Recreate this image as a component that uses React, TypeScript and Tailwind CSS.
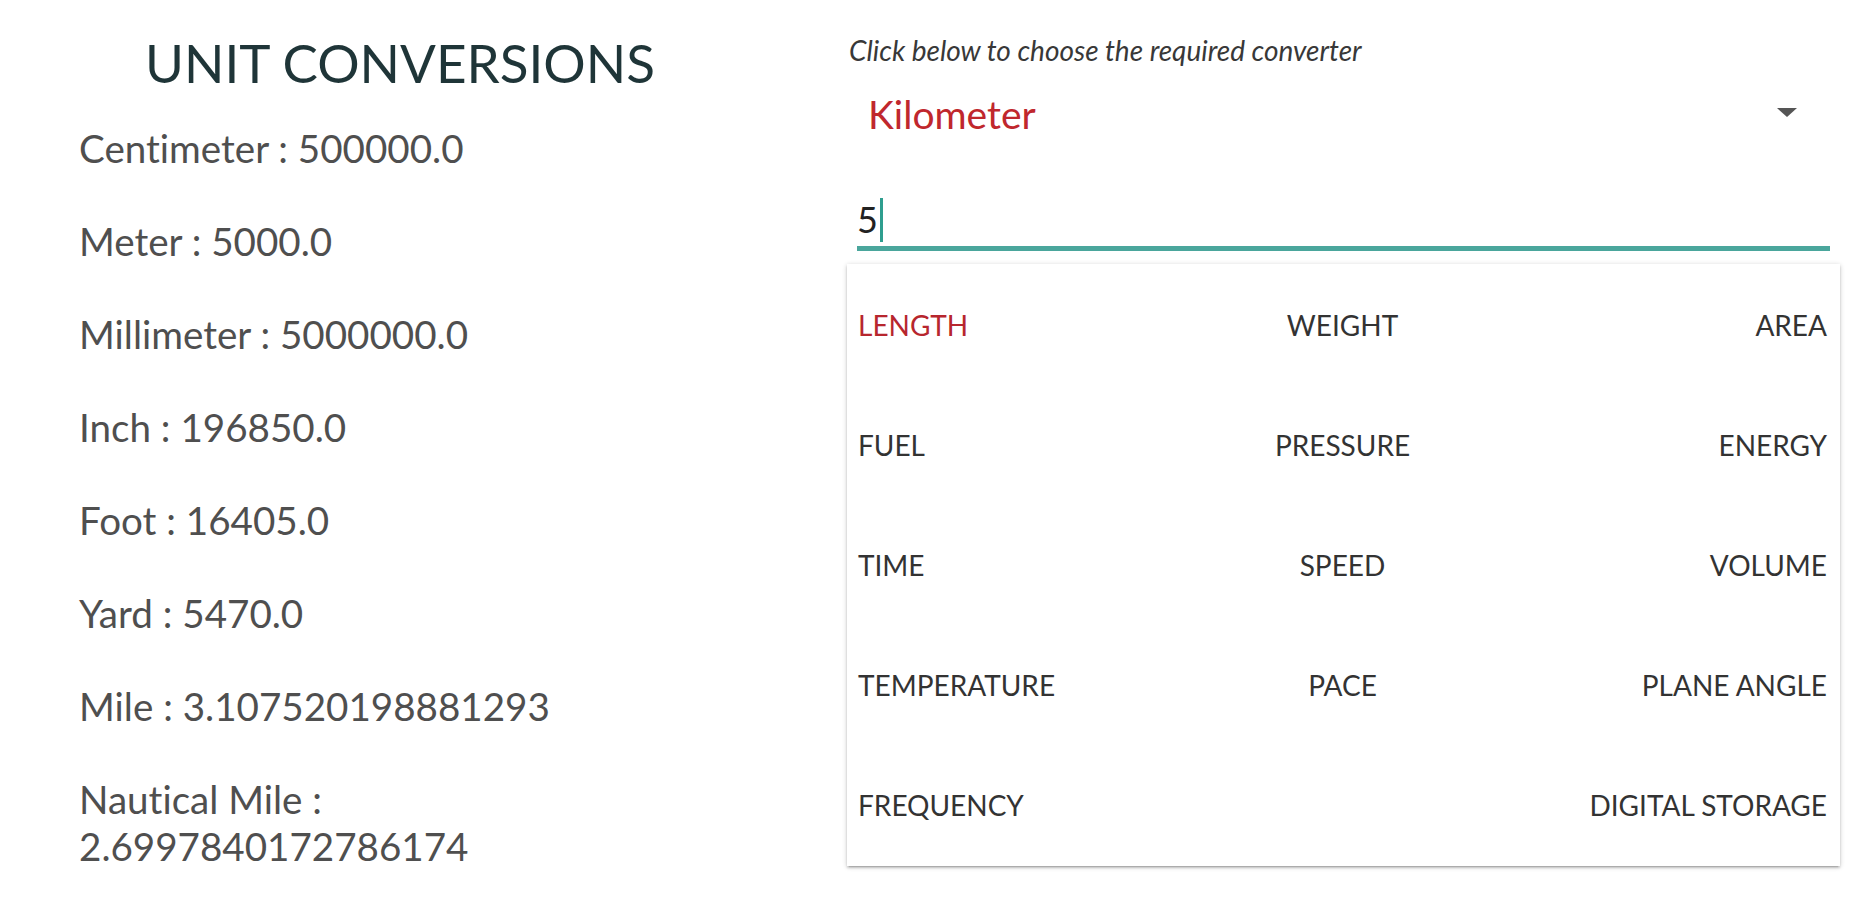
import React from "react";

const results: string[] = [
  "Centimeter : 500000.0",
  "Meter : 5000.0",
  "Millimeter : 5000000.0",
  "Inch : 196850.0",
  "Foot : 16405.0",
  "Yard : 5470.0",
  "Mile : 3.107520198881293",
  "Nautical Mile : 2.6997840172786174",
];

const categories: { label: string; active?: boolean }[] = [
  { label: "LENGTH", active: true },
  { label: "WEIGHT" },
  { label: "AREA" },
  { label: "FUEL" },
  { label: "PRESSURE" },
  { label: "ENERGY" },
  { label: "TIME" },
  { label: "SPEED" },
  { label: "VOLUME" },
  { label: "TEMPERATURE" },
  { label: "PACE" },
  { label: "PLANE ANGLE" },
  { label: "FREQUENCY" },
  { label: "" },
  { label: "DIGITAL STORAGE" },
];

const alignClasses = ["justify-start", "justify-center", "justify-end"];

export default function App() {
  return (
    <div
      className="flex w-full h-[900px] bg-white overflow-hidden [font-variant-ligatures:none]"
      style={{ fontFamily: "Lato, 'Open Sans', 'Liberation Sans', sans-serif" }}
    >
      {/* Left column */}
      <div className="w-[800px] shrink-0 flex flex-col">
        <h1 className="pt-[31px] text-center text-[53px] leading-[64px] font-normal text-[#1f3538]">
          UNIT CONVERSIONS
        </h1>
        <div className="mt-[30px] pl-[79px] w-[650px] flex flex-col gap-[46px]">
          {results.map((r) => (
            <p key={r} className="text-[38.6px] leading-[47px] text-[#4f4f4f]">
              {r}
            </p>
          ))}
        </div>
      </div>

      {/* Right column */}
      <div className="ml-[49px] w-[992px] shrink-0 flex flex-col">
        <p className="pt-[33px] text-[28px] leading-[34px] italic text-[#383838]">
          Click below to choose the required converter
        </p>

        <div className="mt-[25px] flex items-center justify-between pl-[19px] pr-[44px] h-[44px]">
          <span className="text-[39px] leading-[44px] text-[#c0272d]">Kilometer</span>
          <svg width="20" height="9" viewBox="0 0 20 9" className="mt-[-4px]">
            <path d="M0 0 H20 L10 9 Z" fill="#555555" />
          </svg>
        </div>

        <div className="mt-[62px] ml-[8px] w-[973px] border-b-[5px] border-[#4aa69c] pb-[5px]">
          <div className="flex items-center h-[43px] text-[36px] leading-[43px] text-[#222222]">
            <span>5</span>
            <span className="ml-[2px] w-[3px] h-[44px] bg-[#2f9e8f]" />
          </div>
        </div>

        <div className="mt-[13px] -ml-[2px] w-[993px] h-[602px] py-[1px] bg-white shadow-[0_2px_2px_0_rgba(0,0,0,0.14),0_3px_1px_-2px_rgba(0,0,0,0.12),0_1px_5px_0_rgba(0,0,0,0.2)]">
          <div className="grid grid-cols-3 grid-rows-5 h-full pl-[11px] pr-[13px]">
            {categories.map((c, i) => (
              <div
                key={i}
                className={`flex items-center h-[120px] ${alignClasses[i % 3]}`}
              >
                <span
                  className={`text-[28px] leading-[34px] ${
                    c.active ? "text-[#b7262e]" : "text-[#333333]"
                  }`}
                >
                  {c.label}
                </span>
              </div>
            ))}
          </div>
        </div>
      </div>
    </div>
  );
}
